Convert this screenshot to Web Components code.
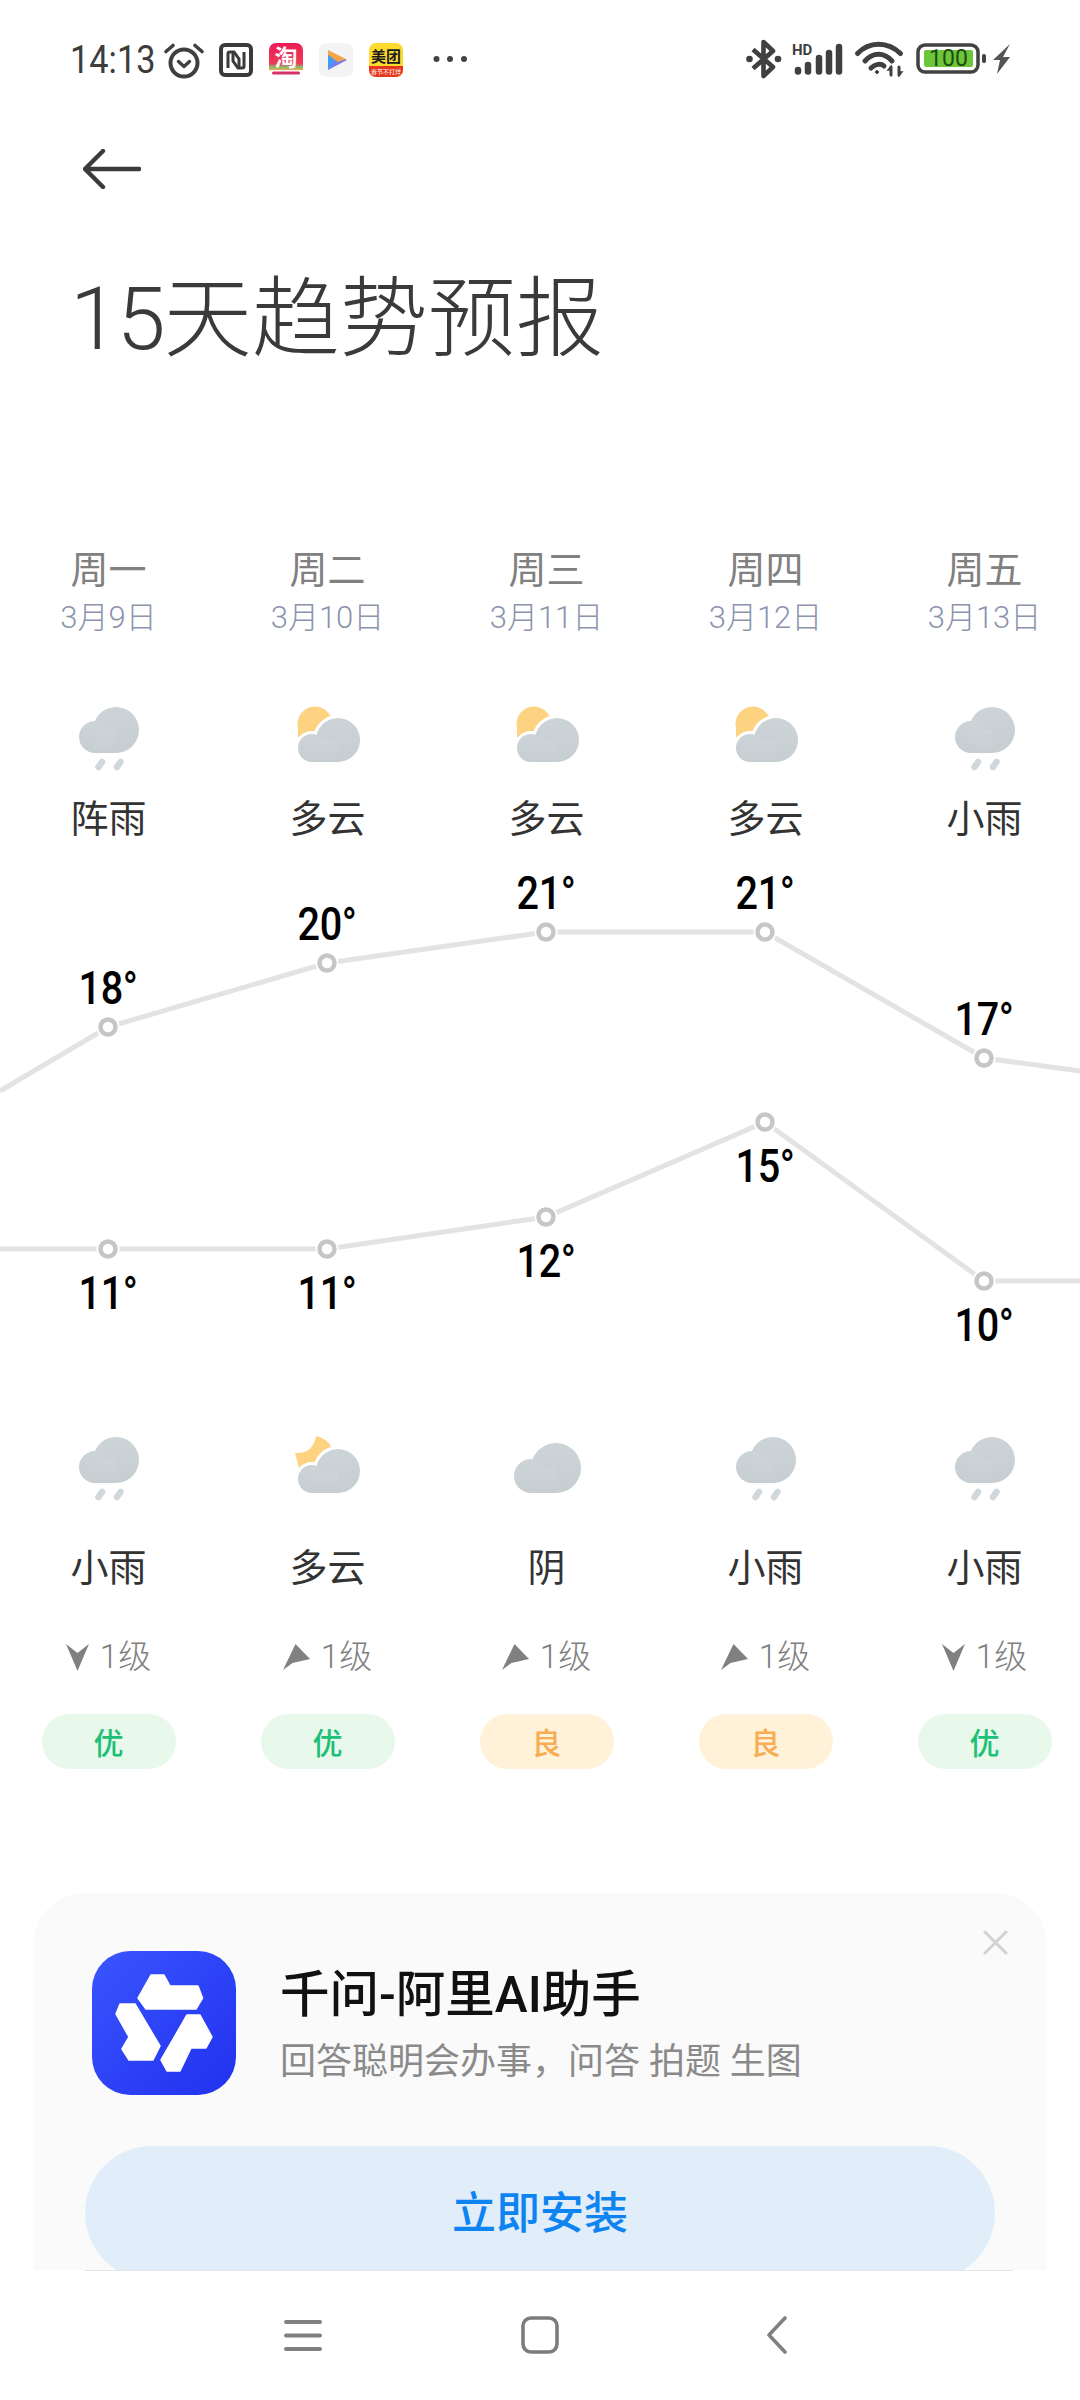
<!DOCTYPE html>
<html lang="zh-CN">
<head>
<meta charset="utf-8">
<title>15天趋势预报</title>
<style>
html,body{margin:0;padding:0;background:#fff}
body{font-family:Roboto,"Noto Sans CJK SC",sans-serif;width:1080px;height:2400px;overflow:hidden}
</style>
</head>
<body>
<weather-app>
  <status-bar></status-bar>
  <back-row></back-row>
  <page-title><span style="letter-spacing:-2px">15</span>天趋势预报</page-title>
  <day-grid class="top">
    <day-top icon="rain"><span slot="week">周一</span><span slot="date">3月9日</span>阵雨</day-top>
    <day-top icon="sun"><span slot="week">周二</span><span slot="date">3月10日</span>多云</day-top>
    <day-top icon="sun"><span slot="week">周三</span><span slot="date">3月11日</span>多云</day-top>
    <day-top icon="sun"><span slot="week">周四</span><span slot="date">3月12日</span>多云</day-top>
    <day-top icon="rain"><span slot="week">周五</span><span slot="date">3月13日</span>小雨</day-top>
  </day-grid>
  <trend-chart></trend-chart>
  <day-grid>
    <day-bottom icon="rain" wind="down" level="优"><span slot="wind">1级</span>小雨</day-bottom>
    <day-bottom icon="moon" wind="right" level="优"><span slot="wind">1级</span>多云</day-bottom>
    <day-bottom icon="cloud" wind="right" level="良"><span slot="wind">1级</span>阴</day-bottom>
    <day-bottom icon="rain" wind="right" level="良"><span slot="wind">1级</span>小雨</day-bottom>
    <day-bottom icon="rain" wind="down" level="优"><span slot="wind">1级</span>小雨</day-bottom>
  </day-grid>
  <ad-card slot="ad"></ad-card>
  <nav-bar slot="nav"></nav-bar>
</weather-app>
<script>
function def(name, css, html, extra){
  customElements.define(name, class extends HTMLElement{
    connectedCallback(){
      if(this.shadowRoot) return;
      const r=this.attachShadow({mode:'open'});
      r.innerHTML='<style>'+css+'</style>'+(typeof html==='function'?html(this):html);
      if(extra) extra(this,r);
    }
  });
}
function cloudShapes(big,small,bottom,extra){
  const [bx,by,br]=big,[sx,sy,sr]=small;
  const shape=(attr)=>`<g ${attr}><circle cx="${bx}" cy="${by}" r="${br}"/><circle cx="${sx}" cy="${sy}" r="${sr}"/><rect x="${sx}" y="${by}" width="${bx-sx}" height="${bottom-by}"/></g>`;
  return shape('fill="#fff" stroke="#fff" stroke-width="6"')+shape('fill="url(#cg)"');
}
const DEFS=`<defs><linearGradient id="cg" x1="0" y1="0" x2="0" y2="1"><stop offset="0" stop-color="#ccd4d8"/><stop offset="1" stop-color="#c6ced2"/></linearGradient></defs>`;
const ICONS={
  rain:cloudShapes([57,30,23],[36,37,16],53)+`<g stroke="#d0d8dc" stroke-width="6.5" stroke-linecap="round"><line x1="43" y1="62" x2="39.5" y2="67"/><line x1="61.5" y1="62" x2="58" y2="67"/></g>`,
  sun:`<path d="M20 37 V28 A17 17 0 0 1 54 20 L40 40 Z" fill="#fdd381"/>`+cloudShapes([60,40,22],[34,48,14],62),
  moon:`<path d="M17 23 Q35 24 38 6 Q49 8 54 18 L40 40 L21 38 Z" fill="#fdd381"/>`+cloudShapes([60,41,22],[34,49,14],63),
  cloud:cloudShapes([59,38,25],[34,46,17],63)
};
function weatherIcon(k){return `<svg width="100" height="80" viewBox="0 0 100 80" style="display:block">${DEFS}${ICONS[k]}</svg>`;}

def('weather-app',`:host{display:flex;flex-direction:column;width:1080px;height:2400px;overflow:hidden;background:#fff;color:#333;font-family:Roboto,"Noto Sans CJK SC",sans-serif}
.scroll{flex:1;min-height:0;overflow:hidden;display:flex;flex-direction:column}
.scroll ::slotted(*){flex:none}
.nav{flex:none}`,
`<div class="scroll"><slot></slot><slot name="ad"></slot></div><div class="nav"><slot name="nav"></slot></div>`);

def('status-bar',`:host{display:block;height:116px}
svg{display:block;overflow:visible}
text{font-family:Roboto,"Noto Sans CJK SC",sans-serif}
.row{display:flex;align-items:center;height:36px;padding:42px 0 0 70px;position:relative}
.time{font-size:39px;line-height:36px;color:#3d3d3d;width:94px;white-space:nowrap;transform:scaleX(.88);transform-origin:left;}
.ic{flex:none;margin-right:16px;width:34px;height:34px}
.sp{flex:1}`,
`<div class="row">
<span class="time">14:13</span>
<svg class="ic" style="width:40px;height:36px;margin-right:15px" viewBox="0 0 40 36" fill="none" stroke="#3f3f3f"><circle cx="20" cy="21" r="13.5" stroke-width="4"/><path d="M14.5 19.5 20 24.5 25.5 19.5" stroke-width="3.4" stroke-linecap="round" stroke-linejoin="round"/><path d="M2 9.5 9 3.5M38 9.5 31 3.5" stroke-width="3.6" stroke-linecap="round"/></svg>
<svg class="ic" viewBox="0 0 34 34"><rect x="2" y="2" width="30" height="30" rx="4" fill="none" stroke="#3a3a3a" stroke-width="4"/><path d="M9 25V10.5Q9 9 11 9H15L20 16V24" fill="none" stroke="#3a3a3a" stroke-width="3"/><path d="M25 9V23.5Q25 25 23 25H19L14 18V10" fill="none" stroke="#3a3a3a" stroke-width="3"/></svg>
<svg class="ic" viewBox="0 0 34 34"><defs><linearGradient id="tb" x1="0" y1="0" x2="0" y2="1"><stop offset="0" stop-color="#ec1c56"/><stop offset=".6" stop-color="#ee3b55"/><stop offset=".72" stop-color="#8ac06c"/><stop offset=".8" stop-color="#f3a84a"/><stop offset=".81" stop-color="#fff"/></linearGradient></defs><rect width="34" height="34" rx="7" fill="url(#tb)"/><text x="17" y="23" font-size="23" font-weight="700" fill="#fff" text-anchor="middle">淘</text><rect x="3" y="28.5" width="28" height="3" rx="1.5" fill="#d8326a"/></svg>
<svg class="ic" viewBox="0 0 34 34"><defs><linearGradient id="pl" x1="0" y1="0" x2="1" y2="1"><stop offset="0" stop-color="#3d9bf5"/><stop offset="1" stop-color="#a066f0"/></linearGradient></defs><rect width="34" height="34" rx="7" fill="#f4f4f5"/><path d="M9 8 28 17 9 27Z" fill="url(#pl)"/><path d="M9 7 27 16 19 19 9 12Z" fill="#f6a545"/><path d="M9 12 15 17 9 27Z" fill="#3fa0f2"/></svg>
<svg class="ic" viewBox="0 0 34 34"><defs><clipPath id="mt"><rect width="34" height="34" rx="7"/></clipPath></defs><g clip-path="url(#mt)"><rect width="34" height="34" fill="#fddb2e"/><rect y="23" width="34" height="11" fill="#e8361e"/><text x="17" y="19" font-size="15" font-weight="700" fill="#1b1b1b" text-anchor="middle">美团</text><text x="17" y="31" font-size="6" fill="#fff" text-anchor="middle">春节不打烊</text></g></svg>
<svg class="ic" style="width:34px;margin:0 0 0 14px" viewBox="0 0 34 34" fill="#424242"><circle cx="3.5" cy="16" r="3"/><circle cx="17" cy="16" r="3"/><circle cx="31" cy="16" r="3"/></svg>
<span class="sp"></span>
<svg style="margin-right:10px;margin-top:-2px;flex:none" width="36" height="40" viewBox="0 0 36 40" fill="none"><path d="M7 10.5 27 28 17.5 37V3L27 12 7 29.5" stroke="#404040" stroke-width="4.6" stroke-linejoin="round"/><circle cx="3.5" cy="20" r="3.3" fill="#404040"/><circle cx="32" cy="20" r="3.3" fill="#404040"/></svg>
<svg style="margin-right:12px;margin-top:-2px;flex:none" width="51" height="32" viewBox="0 0 51 32"><text x="0" y="12" font-size="15" font-weight="700" fill="#404040" font-family="Roboto">HD</text><g stroke="#404040" stroke-width="6.500" stroke-linecap="round"><line x1="6" y1="27" x2="6" y2="28.5"/><line x1="16" y1="22" x2="16" y2="28.5"/><line x1="27" y1="15" x2="27" y2="28.5"/><line x1="37" y1="10" x2="37" y2="28.5"/><line x1="47" y1="4" x2="47" y2="28.5"/></g></svg>
<svg style="margin-right:13px;margin-top:-2px;flex:none" width="48" height="34" viewBox="0 0 48 34" fill="none" stroke="#404040" stroke-linecap="round"><path d="M2.5 11.5C14 -1 33 -1 45.5 11.5" stroke-width="5"/><path d="M10 19C18 10 29 10 37 19" stroke-width="5"/><path d="M16 26C20 22 26 21 29 24" stroke-width="5"/><circle cx="22" cy="30" r="1.5" fill="#404040"/><path d="M36 25V33M44 25V33" stroke-width="3"/><path d="M33 28 36 24.5 36 28ZM44 30 47 30 44 33.5Z" fill="#404040" stroke-width="1.5"/></svg>
<svg style="flex:none;margin-right:4px;margin-top:-2px" width="72" height="32" viewBox="0 0 72 32"><rect x="2" y="2" width="60" height="27" rx="7" fill="none" stroke="#424242" stroke-width="3.5"/><rect x="8" y="7" width="49" height="17" rx="2" fill="#6cc63a"/><text x="32.500" y="23" font-size="23" fill="#1d4d12" text-anchor="middle" font-family="Roboto">100</text><rect x="66" y="11" width="4" height="9" rx="2" fill="#424242"/></svg>
<svg style="flex:none;margin-right:69px;margin-top:-2px" width="19" height="32" viewBox="0 0 19 32"><path d="M18 1 1 17H8L5 31 18 14H11Z" fill="#555"/></svg>
</div>`);

def('back-row',`:host{display:block;height:104px;padding-left:83px}
svg{display:block;margin-top:33px}`,
`<svg width="58" height="40" viewBox="0 0 58 40" fill="none" stroke="#3a3a3a" stroke-width="4.400" stroke-linecap="round" stroke-linejoin="round"><path d="M56 20H3M20 2 2 20 20 38"/></svg>`);

def('page-title',`:host{display:block;margin:39px 0 167px 70px;font-size:88px;line-height:120px;font-weight:300;color:#3a3a3a;white-space:nowrap}`,`<slot></slot>`);

def('day-grid',`:host{display:grid;grid-template-columns:repeat(5,219px);width:1095px;margin-left:-1px}`,`<slot></slot>`);

def('day-top',`:host{display:flex;flex-direction:column;align-items:center;text-align:center}
.w{font-size:38px;line-height:48px;color:#808080}
.d{font-size:31px;line-height:44px;margin-top:2px;color:#8b93ad;font-weight:300;white-space:nowrap}
.i{margin-top:60px;height:80px}
.l{margin-top:15px;font-size:38px;line-height:48px;color:#333}`,
h=>`<div class="w"><slot name="week"></slot></div><div class="d"><slot name="date"></slot></div><div class="i">${weatherIcon(h.getAttribute('icon'))}</div><div class="l"><slot></slot></div>`);

const ARROWS={
  down:`<polygon points="0,0 11.500,9 23,0 11.500,27" fill="#808080"/>`,
  right:`<polygon points="0,26 12.500,0 27,15 9.500,19" fill="#808080"/>`
};
def('day-bottom',`:host{display:flex;flex-direction:column;align-items:center;text-align:center}
.i{height:80px}
.l{margin-top:34px;font-size:38px;line-height:48px;color:#333}
.w{margin-top:43px;display:flex;align-items:center;gap:11px;font-size:33px;line-height:44px;color:#808080;font-weight:300;white-space:nowrap}
svg.a{display:block;flex:none}
.p{margin-top:35px;width:134px;height:55px;box-sizing:border-box;padding-bottom:2px;border-radius:28px;display:flex;align-items:center;justify-content:center;font-size:30px;font-weight:500}
.g{background:#e8f9ec;color:#20bf78}
.o{background:#fff2d8;color:#f6ad55}`,
h=>{const w=h.getAttribute('wind'),lv=h.getAttribute('level');
return `<div class="i">${weatherIcon(h.getAttribute('icon'))}</div><div class="l"><slot></slot></div><div class="w"><svg class="a" width="${w==='down'?23:27}" height="27" viewBox="0 0 ${w==='down'?23:27} 27">${ARROWS[w]}</svg><slot name="wind"></slot></div><div class="p ${lv==='优'?'g':'o'}">${lv}</div>`;});

const O=843, X=[108,327,546,765,984];
const HI=[[18,1027],[20,963],[21,932],[21,932],[17,1058]];
const LO=[[11,1249],[11,1249],[12,1217],[15,1122],[10,1281]];
def('trend-chart',`:host{display:block;position:relative;width:1080px;height:587px}
svg{position:absolute;left:0;top:0}
.t{position:absolute;font-size:46px;line-height:50px;font-weight:500;color:#000;transform:translate(-50%,-50%) scaleX(.86);white-space:nowrap;letter-spacing:-.5px}`,
()=>{
  const line=(pts)=>`<polyline points="${pts.map(p=>p[0]+','+(p[1]-O)).join(' ')}" fill="none" stroke="#e3e3e3" stroke-width="5"/>`;
  const hi=[[0,1091],...HI.map((h,i)=>[X[i],h[1]]),[1080,1071]];
  const lo=[[0,1249],...LO.map((h,i)=>[X[i],h[1]]),[1080,1281]];
  const nodes=[...HI,...LO].map((h,i)=>{const x=X[i%5],y=h[1]-O;return `<circle cx="${x}" cy="${y}" r="11.500" fill="#fff"/><circle cx="${x}" cy="${y}" r="7.500" fill="#fff" stroke="#c6c6c6" stroke-width="4.500"/>`}).join('');
  const labels=HI.map((h,i)=>`<span class="t" style="left:${X[i]}px;top:${h[1]-O-39}px">${h[0]}°</span>`).join('')+LO.map((h,i)=>`<span class="t" style="left:${X[i]}px;top:${h[1]-O+44}px">${h[0]}°</span>`).join('');
  return `<svg width="1080" height="587" viewBox="0 0 1080 587">${line(hi)}${line(lo)}${nodes}</svg>${labels}`;
});

def('ad-card',`:host{display:block;margin:124px 34px 0;height:420px;background:#fafafa;border-radius:50px 50px 0 0;position:relative}
.top{display:flex;padding:58px 0 0 58px;gap:44px}
.logo{flex:none;display:block}
.tt{font-size:49.500px;line-height:60px;font-weight:500;color:#111;margin-top:14px;white-space:nowrap}
.sb{font-size:36px;line-height:46px;color:#8a8a8a;margin-top:14px;white-space:nowrap}
.x{position:absolute;right:38px;top:37px}
.btn{margin:51px 0 0 51px;width:910px;height:134px;box-sizing:border-box;padding-bottom:6px;border-radius:67px;background:#e1edf9;color:#0d84f2;font-size:44px;font-weight:500;display:flex;align-items:center;justify-content:center}`,
`<svg class="x" width="25" height="25" viewBox="0 0 25 25" stroke="#d2d2d2" stroke-width="3" stroke-linecap="round"><path d="M2 2 23 23M23 2 2 23"/></svg>
<div class="top">
<svg class="logo" width="144" height="144" viewBox="0 0 144 144"><defs><linearGradient id="qw" x1="0" y1="0" x2="1" y2="1"><stop offset="0" stop-color="#3a55ff"/><stop offset="1" stop-color="#2131ee"/></linearGradient></defs><rect width="144" height="144" rx="38" fill="url(#qw)"/><g fill="#fff" stroke="#fff" stroke-width="1.500" stroke-linejoin="round"><polygon points="59,24 72,24 78,35 106,35 110.500,47 104,58 54,58 46,47"/><polygon points="28,53 43,53 68,95 61,109 37,109 30,98 37,86 24,63"/><polygon points="95,64 108,64 120,86 114,97 99,97 88,120 75,120 69,109"/></g></svg>
<div><div class="tt">千问-阿里AI助手</div><div class="sb">回答聪明会办事，问答 拍题 生图</div></div>
</div>
<div class="btn">立即安装</div>`);

def('nav-bar',`:host{display:block;height:130px;background:#fff;position:relative}
.line{height:1px;margin:0 67px 0 85px;background:#e3e6ea}
.icons{display:flex;padding:45px 0 0 284px;align-items:flex-start}
svg{display:block;flex:none}`,
`<div class="line"></div><div class="icons">
<svg style="margin-top:3px" width="38" height="33" viewBox="0 0 38 33" stroke="#808080" stroke-width="4" stroke-linecap="round"><path d="M2 3H36M2 16.500H36M2 30H36"/></svg>
<svg style="margin-left:199px" width="38" height="38" viewBox="0 0 38 38" fill="none" stroke="#7c7c7c" stroke-width="3.600"><rect x="2" y="2" width="34" height="34" rx="8"/></svg>
<svg style="margin-left:207px" width="22" height="38" viewBox="0 0 22 38" fill="none" stroke="#808080" stroke-width="3.600" stroke-linecap="round" stroke-linejoin="round"><path d="M19 2 3 19 19 36"/></svg>
</div>`);
</script>
</body>
</html>
